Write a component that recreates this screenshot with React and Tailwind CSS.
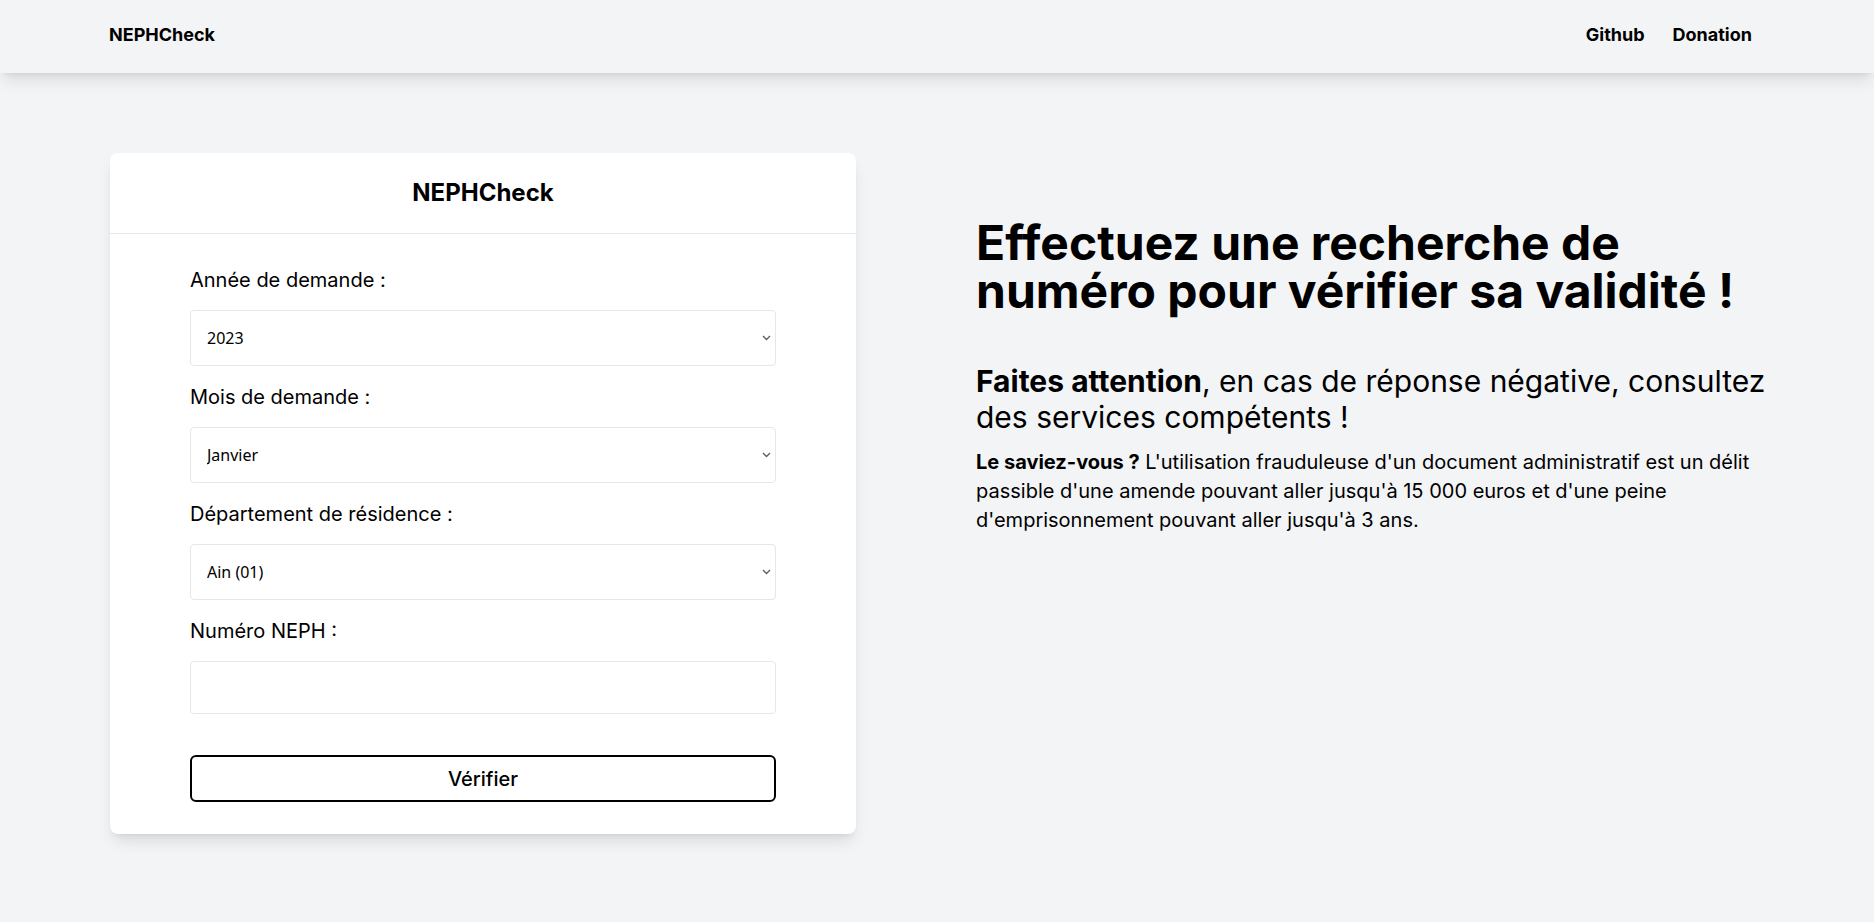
import React from 'react';

const Chevron = () => (
  <svg className="pointer-events-none absolute right-[5px] top-1/2 -translate-y-1/2" width="9" height="6" viewBox="0 0 9 6" fill="none">
    <path d="M1 1l3.5 3.5L8 1" stroke="#5f5f5f" strokeWidth="1.4" />
  </svg>
);

const SelectField = ({ label, value }) => (
  <div className="mb-[17px]">
    <label className="block text-xl leading-7 mb-4 text-black">{label}</label>
    <div className="relative">
      <select
        defaultValue={value}
        className="w-full h-14 appearance-none rounded border border-gray-200 bg-white pl-4 pr-6 text-base text-black font-['Noto_Sans',sans-serif] outline-none"
      >
        <option value={value}>{value}</option>
      </select>
      <Chevron />
    </div>
  </div>
);

export default function App() {
  return (
    <div className="min-h-screen bg-gray-100 font-['Inter',sans-serif] text-black">
      <header className="h-[73px] bg-gray-100 shadow-lg flex items-center justify-between pl-[109px] pr-[122px] pb-1">
        <a className="text-lg font-bold">NEPHCheck</a>
        <nav className="flex gap-[28px] text-lg font-bold">
          <a>Github</a>
          <a>Donation</a>
        </nav>
      </header>

      <main className="flex pl-[110px] pt-20 gap-[120px]">
        <div className="w-[746px] shrink-0 bg-white rounded-lg shadow-lg">
          <div className="py-6 text-center border-b border-gray-200">
            <h2 className="text-2xl font-bold">NEPHCheck</h2>
          </div>
          <form className="px-20 pt-8 pb-8" onSubmit={(e) => e.preventDefault()}>
            <SelectField label="Année de demande :" value="2023" />
            <SelectField label="Mois de demande :" value="Janvier" />
            <SelectField label="Département de résidence :" value="Ain (01)" />
            <div>
              <label className="block text-xl leading-7 mb-4">Numéro NEPH :</label>
              <input type="text" className="w-full h-[53px] rounded border border-gray-200 bg-white px-4 text-base outline-none" />
            </div>
            <button type="submit" className="mt-[41px] w-full h-[47px] border-2 border-black rounded-md text-xl font-medium bg-white">
              Vérifier
            </button>
          </form>
        </div>

        <div className="w-[814px] pt-[66px]">
          <h1 className="text-5xl font-bold leading-[48px]">
            Effectuez une recherche de numéro pour vérifier sa validité !
          </h1>
          <h3 className="mt-12 text-3xl leading-9">
            <span className="font-bold">Faites attention</span>, en cas de réponse négative, consultez des services compétents !
          </h3>
          <p className="mt-[13px] text-xl leading-[29px]">
            <span className="font-bold">Le saviez-vous ?</span> L'utilisation frauduleuse d'un document administratif est un délit passible d'une amende pouvant aller jusqu'à 15 000 euros et d'une peine d'emprisonnement pouvant aller jusqu'à 3 ans.
          </p>
        </div>
      </main>
    </div>
  );
}
